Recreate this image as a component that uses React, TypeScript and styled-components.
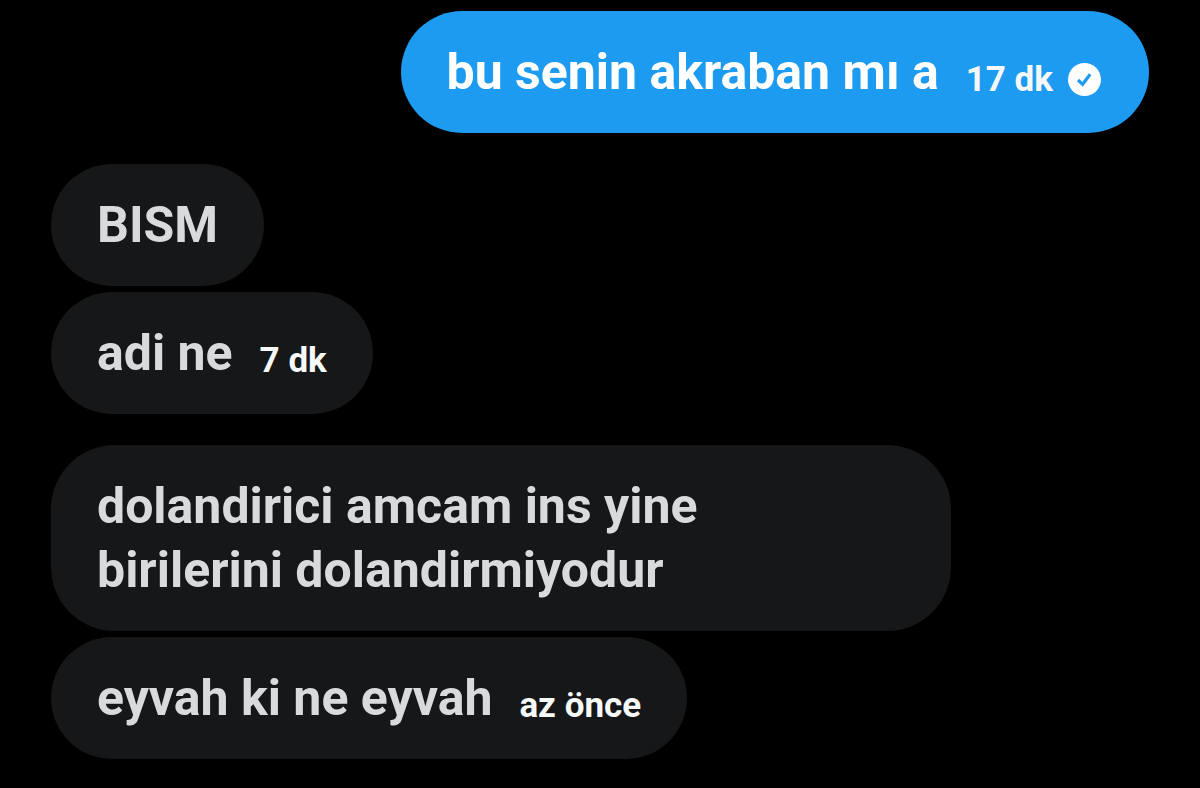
import React from "react";
import styled, { createGlobalStyle } from "styled-components";

const GlobalStyle = createGlobalStyle`
  * { box-sizing: border-box; }
  body { margin: 0; background: #000; }
`;

const Conversation = styled.main`
  display: flex;
  flex-direction: column;
  gap: 31px;
  min-height: 100vh;
  padding: 11px 51px 29px;
  background: #000;
  font-family: Roboto, "Liberation Sans", sans-serif;
  font-weight: 700;
`;

const MessageGroup = styled.section<{ $own?: boolean }>`
  display: flex;
  flex-direction: column;
  align-items: ${(p) => (p.$own ? "flex-end" : "flex-start")};
  gap: 6px;
`;

const Bubble = styled.article<{ $own?: boolean; $wide?: boolean }>`
  display: flex;
  align-items: flex-end;
  gap: 27px;
  width: ${(p) => (p.$wide ? "82%" : "auto")};
  max-width: 82%;
  padding: 29px 46px;
  border-radius: 64px;
  background: ${(p) => (p.$own ? "#1d9bf0" : "#161718")};
  color: ${(p) => (p.$own ? "#fff" : "#d9dadb")};
`;

const MessageText = styled.p`
  margin: 0;
  font-size: 50px;
  line-height: 64px;
`;

const Meta = styled.span`
  display: flex;
  align-items: center;
  gap: 14px;
  color: #f7f9f9;
  font-size: 35px;
  line-height: 48px;
  white-space: nowrap;
`;

const SentIcon = () => (
  <svg width="36" height="34" viewBox="0 0 36 34" role="img" aria-label="Gönderildi">
    <circle cx="17.5" cy="16.5" r="16.5" fill="#fff" />
    <path d="M11 17l4.6 4.3L23.2 11.3" fill="none" stroke="#1d9bf0" strokeWidth="3.2" />
  </svg>
);

export default function App() {
  return (
    <>
      <GlobalStyle />
      <Conversation>
        <MessageGroup $own>
          <Bubble $own>
            <MessageText>bu senin akraban mı a</MessageText>
            <Meta>
              <time>17 dk</time>
              <SentIcon />
            </Meta>
          </Bubble>
        </MessageGroup>
        <MessageGroup>
          <Bubble>
            <MessageText>BISM</MessageText>
          </Bubble>
          <Bubble>
            <MessageText>adi ne</MessageText>
            <Meta>
              <time>7 dk</time>
            </Meta>
          </Bubble>
        </MessageGroup>
        <MessageGroup>
          <Bubble $wide>
            <MessageText>
              dolandirici amcam ins yine
              <br />
              birilerini dolandirmiyodur
            </MessageText>
          </Bubble>
          <Bubble>
            <MessageText>eyvah ki ne eyvah</MessageText>
            <Meta>
              <time>az önce</time>
            </Meta>
          </Bubble>
        </MessageGroup>
      </Conversation>
    </>
  );
}
